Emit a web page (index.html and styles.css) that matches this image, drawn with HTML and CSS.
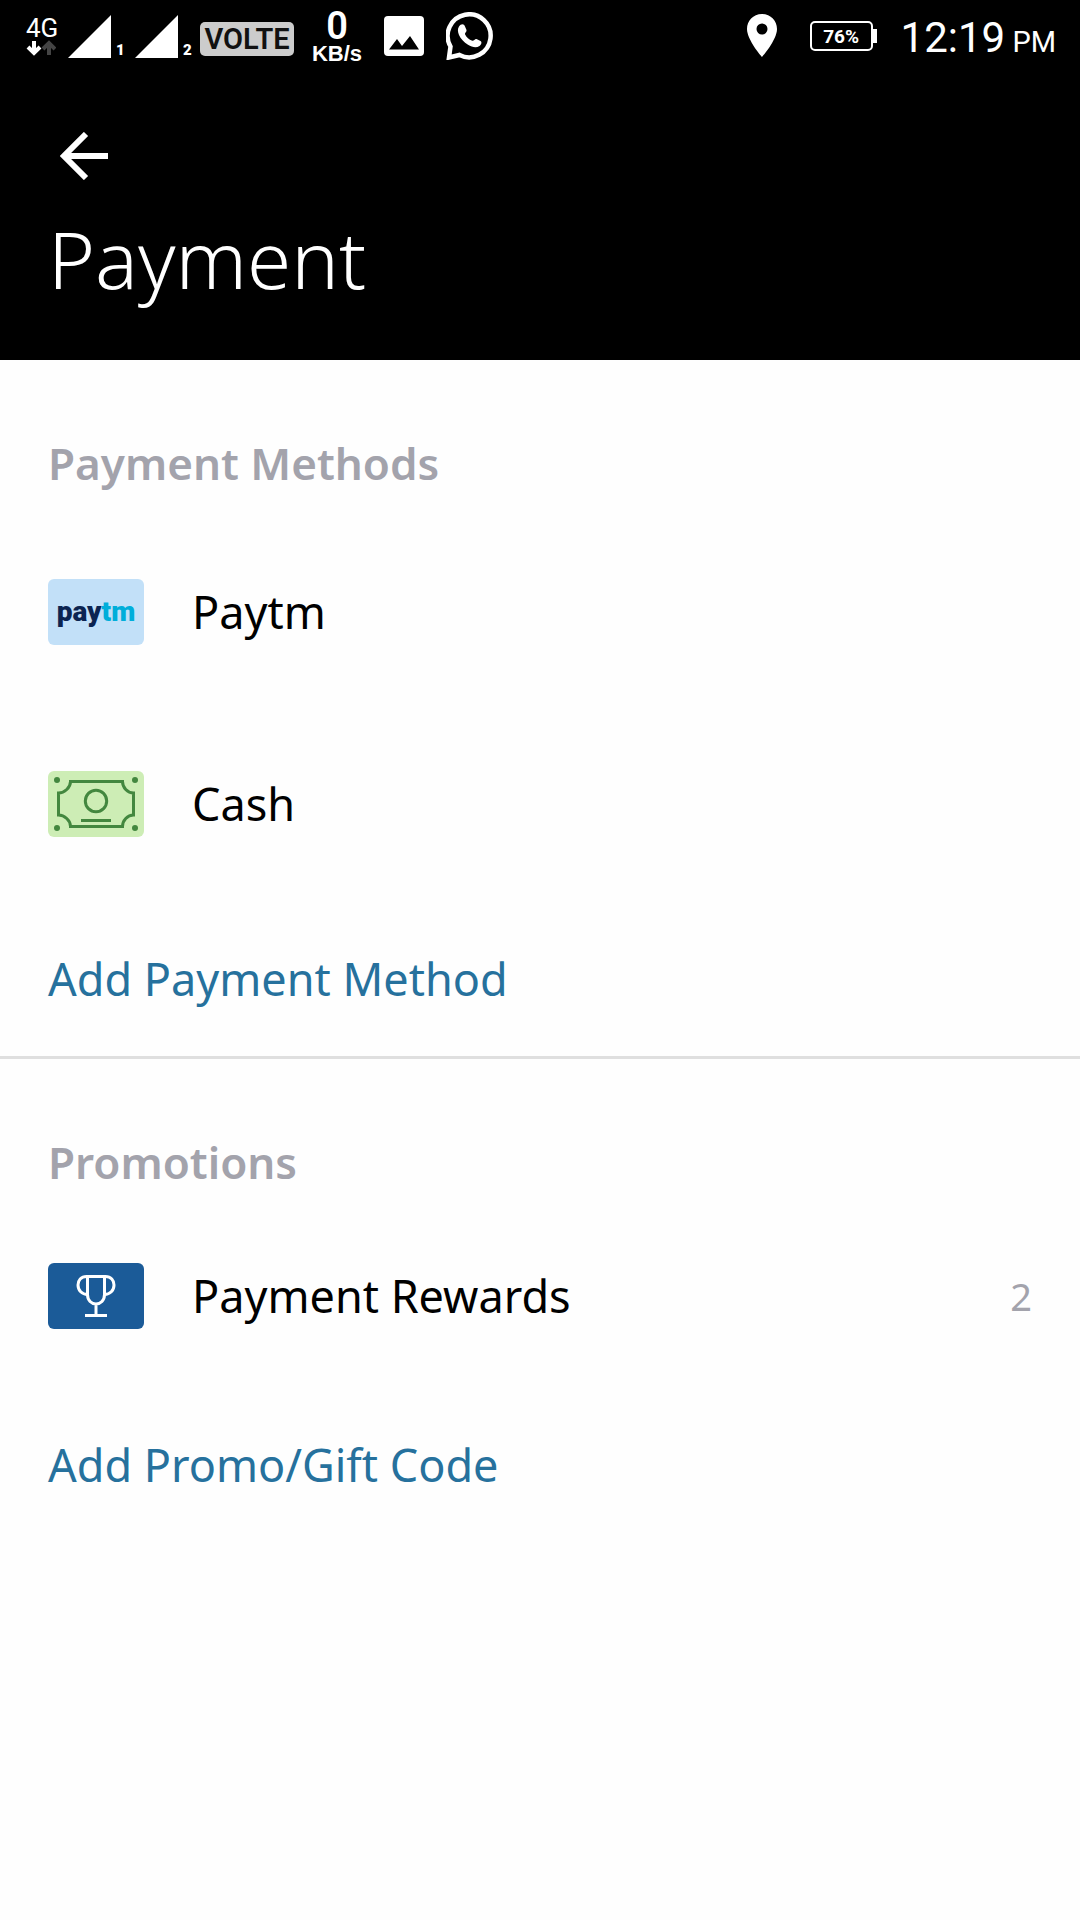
FILE: index.html
```html
<!DOCTYPE html>
<html lang="en">
<head>
<meta charset="utf-8">
<meta name="viewport" content="width=device-width, initial-scale=1">
<title>Payment</title>
<link rel="stylesheet" href="styles.css">
</head>
<body>
<header class="header">
  <div class="status">
    <div class="status-side">
      <div class="network">
        <span class="network-type">4G</span>
        <svg width="30" height="16" viewBox="0 0 30 16" aria-hidden="true">
          <path d="M8 1v11M2 7l6 6 6-6" fill="none" stroke="#fff" stroke-width="4"/>
          <path d="M23 15V4M17 9l6-6 6 6" fill="none" stroke="#444" stroke-width="4"/>
        </svg>
      </div>
      <div class="signal">
        <svg width="43" height="43" viewBox="0 0 43 43" aria-hidden="true"><path d="M43 0v43H0z" fill="#fff"/></svg>
        <span class="sim">1</span>
      </div>
      <div class="signal">
        <svg width="43" height="43" viewBox="0 0 43 43" aria-hidden="true"><path d="M43 0v43H0z" fill="#fff"/></svg>
        <span class="sim">2</span>
      </div>
      <span class="volte">VOLTE</span>
      <div class="speed">
        <span class="speed-value">0</span>
        <span class="speed-unit">KB/s</span>
      </div>
      <svg class="gallery" width="40" height="40" viewBox="0 0 40 40" aria-hidden="true">
        <rect width="40" height="40" rx="4" fill="#fff"/>
        <path d="M5 33.500L13 23l5 7 8-10 9 13.500z" fill="#000"/>
      </svg>
      <svg class="whatsapp" width="48" height="48" viewBox="0 0 48 48" aria-hidden="true">
        <path d="M4.500 34.500A21.500 21.500 0 1 1 13.500 43L3 45.500z" fill="none" stroke="#fff" stroke-width="4.500"/>
        <path d="M13 14.500c2-3 5-3 6 0l1.500 3.500c.6 1.600-2 3-1.500 4.200 1.500 3.200 4 5.300 7.300 6.600 1.500.5 2.700-2.300 4.200-1.700l4 1.900c1.800 1 .8 3.800-1 5-3.500 2.200-7.500 1-11.500-1.200-4-2.300-7.500-6.300-9-9.800-1.200-3-1.700-6 0-8.500z" fill="#fff"/>
      </svg>
    </div>
    <div class="status-side">
      <svg class="pin" width="32" height="44" viewBox="0 0 32 44" aria-hidden="true">
        <path d="M16 0C7 0 1 7 1 15c0 11 15 28 15 28s15-17 15-28C31 7 25 0 16 0zm0 9.500a5.500 5.500 0 1 1 0 11 5.500 5.500 0 0 1 0-11z" fill="#fff" fill-rule="evenodd"/>
      </svg>
      <div class="battery">76%</div>
      <div class="clock">12:19<span class="meridiem"> PM</span></div>
    </div>
  </div>
  <button class="back" type="button" aria-label="Back">
    <svg width="48" height="48" viewBox="0 0 48 48" aria-hidden="true">
      <path d="M48 24H6M26 2L4 24l22 22" fill="none" stroke="#fff" stroke-width="6"/>
    </svg>
  </button>
  <h1 class="title">Payment</h1>
</header>
<main>
  <section class="section">
    <h2 class="heading">Payment Methods</h2>
    <ul class="list">
      <li>
        <a class="row" href="#paytm">
          <span class="badge badge-paytm" aria-hidden="true"><span>pay<span class="tm">tm</span></span></span>
          <span class="label">Paytm</span>
        </a>
      </li>
      <li>
        <a class="row" href="#cash">
          <svg class="badge badge-cash" viewBox="0 0 96 66" aria-hidden="true">
            <g fill="none" stroke="#43873f" stroke-width="3">
              <path d="M22.500 10.500h52c0 6 5 11.500 11 11.500v22c-6 0-11 5.500-11 11.500h-52c0-6-6-11.500-12-11.500V22c6 0 12-5.500 12-11.500z"/>
              <circle cx="48" cy="30" r="10.700"/>
              <path d="M33 49.500h30"/>
            </g>
            <g fill="#43873f"><circle cx="9" cy="9" r="3"/><circle cx="87" cy="9" r="3"/><circle cx="9" cy="57" r="3"/><circle cx="87" cy="57" r="3"/></g>
          </svg>
          <span class="label">Cash</span>
        </a>
      </li>
    </ul>
    <a class="action" href="#add-method">Add Payment Method</a>
  </section>
  <section class="section section-promotions">
    <h2 class="heading">Promotions</h2>
    <ul class="list">
      <li>
        <a class="row" href="#rewards">
          <svg class="badge badge-rewards" viewBox="0 0 96 66" aria-hidden="true">
            <g fill="none" stroke="#fff" stroke-width="3">
              <path d="M39.500 13.500h17v18c0 6-4 9.500-8.500 9.500s-8.500-3.500-8.500-9.500zM48 41v11M37 52.500h22"/>
              <path d="M39.500 13.500h-1c-5.500 0-8.500 4-8.500 8.500 0 5.500 4 9.500 9.500 9.500M56.500 13.500h1c5.500 0 8.500 4 8.500 8.500 0 5.500-4 9.500-9.500 9.500"/>
            </g>
          </svg>
          <span class="label">Payment Rewards</span>
          <span class="count">2</span>
        </a>
      </li>
    </ul>
    <a class="action" href="#add-code">Add Promo/Gift Code</a>
  </section>
</main>
</body>
</html>
```
FILE: styles.css
```css
* { box-sizing: border-box; }

body {
  margin: 0;
  min-height: 100vh;
  background: #fefefe;
  color: #000;
  font-family: "Noto Sans", "Open Sans", sans-serif;
  font-size: 45px;
  line-height: 60px;
}

a { color: inherit; text-decoration: none; }
svg { display: block; flex: none; }

.header {
  background: #000;
  color: #fff;
  padding-bottom: 54px;
}

.status {
  display: flex;
  justify-content: space-between;
  height: 72px;
  padding: 0 24px 0 26px;
  font-family: Roboto, sans-serif;
  line-height: 1;
}

.status-side { display: flex; align-items: center; }

.network {
  display: flex;
  flex-direction: column;
  width: 42px;
}
.network-type {
  font-size: 26px;
  font-weight: 400;
  line-height: 24px;
}

.signal {
  display: flex;
  align-items: flex-end;
  width: 67px;
}
.sim {
  padding-left: 5px;
  font-size: 15px;
  font-weight: 900;
}

.volte {
  width: 94px;
  height: 34px;
  margin: 6px 16px 0 -2px;
  border-radius: 5px;
  background: #ccc;
  color: #111;
  font-size: 29px;
  font-weight: 600;
  line-height: 34px;
  text-align: center;
}

.speed {
  display: flex;
  flex-direction: column;
  align-items: center;
  width: 54px;
}
.speed-value {
  font-size: 38px;
  font-weight: 600;
  line-height: 36px;
}
.speed-unit {
  font: 700 22px/20px "Liberation Sans", Arial, sans-serif;
}

.gallery { margin-left: 20px; }
.whatsapp { margin-left: 22px; }

.battery {
  position: relative;
  width: 63px;
  height: 30px;
  margin: 0 28px 0 32px;
  border: 2px solid #fff;
  border-radius: 5px;
  font-size: 19px;
  font-weight: 700;
  line-height: 27px;
  text-align: center;
}
.battery::after {
  content: "";
  position: absolute;
  top: 6px;
  right: -6px;
  width: 5px;
  height: 14px;
  background: #fff;
}

.clock {
  padding-top: 4px;
  font-size: 42px;
}
.meridiem { font-size: 29px; }

.back {
  display: block;
  margin: 60px 0 0 60px;
  padding: 0;
  border: 0;
  background: none;
}

.title {
  margin: 30px 0 0;
  padding: 0 48px;
  font-size: 80px;
  font-weight: 300;
  line-height: 96px;
}

.section { padding-top: 73px; }
.section + .section { border-top: 3px solid #dfdfdf; }

.heading {
  margin: 0 0 23px;
  padding: 0 48px;
  color: #a3a3ac;
  font-size: 44px;
  font-weight: 600;
}

.list {
  margin: 0;
  padding: 0;
  list-style: none;
}

.row {
  display: flex;
  align-items: center;
  height: 192px;
  padding: 0 48px;
}
.section-promotions .row { height: 162px; }

.badge {
  flex: none;
  width: 96px;
  height: 66px;
  margin-right: 48px;
  border-radius: 6px;
}
.badge-paytm {
  display: flex;
  align-items: center;
  justify-content: center;
  background: #c2e0f8;
  color: #0b2451;
  font: 900 28px/32px Roboto, sans-serif;
}
.tm { color: #00aeda; }
.badge-cash { background: #cdedb5; }
.badge-rewards { background: #1b5b98; }

.label { flex: 1; }
.count {
  color: #a3a3ac;
  font-size: 38px;
}

.action {
  display: block;
  padding: 49px 48px 47px;
  color: #26719d;
}
.section-promotions .action { padding-top: 58px; }
```
